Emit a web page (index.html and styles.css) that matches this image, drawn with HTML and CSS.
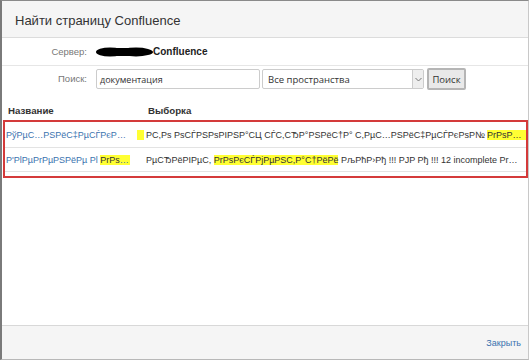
FILE: index.html
```html
<!DOCTYPE html>
<html lang="ru">
<head>
<meta charset="utf-8">
<link rel="stylesheet" href="styles.css">
</head>
<body>
<div class="dialog">
  <div class="header"><h1 class="title">Найти страницу Confluence</h1></div>
  <div class="body">
    <div class="form-row server-row">
      <span class="label">Сервер:</span>
      <span class="server">
        <svg class="blob" width="57" height="10" viewBox="0 0 57 10"><ellipse cx="14" cy="5" rx="14" ry="4.6" fill="#000"/><ellipse cx="40" cy="5" rx="17" ry="4.4" fill="#000"/><rect x="12" y="1" width="30" height="8" fill="#000"/></svg><b class="server-name">Confluence</b>
      </span>
    </div>
    <div class="form-row search-row">
      <span class="label">Поиск:</span>
      <div class="input">документация</div>
      <div class="select"><span class="select-text">Все пространства</span><span class="select-arrow"><svg width="7" height="5" viewBox="0 0 7 5"><path d="M0.5 1 L3.5 4 L6.5 1" fill="none" stroke="#777" stroke-width="1"/></svg></span></div>
      <div class="button">Поиск</div>
    </div>
    <div class="results-head">
      <span class="col-name">Название</span>
      <span class="col-excerpt">Выборка</span>
    </div>
    <div class="results">
      <div class="row">
        <div class="c1"><span class="name">PўPµC…PSPёC‡PµCЃPєPsP№ PrPsPєCЃPjPµPSC,</span><mark class="hl stub">&nbsp;</mark></div>
        <div class="c2">PC,Ps PsCЃPSPsPIPSP°CЦ CЃC,CЂP°PSPёC†P° C,PµC…PSPёC‡PµCЃPєPsP№ <mark class="hl">PrPsPєCЃPjPµPSC,P°C†PёPё</mark></div>
      </div>
      <div class="row">
        <div class="c1"><span class="name">P'PlPµPrPµPSPёPµ Pl <mark class="hl">PrPsPєCЃPjPµPSC,P°C†PёCЋ</mark></span></div>
        <div class="c2">PµCЂPёPIPµC, <mark class="hl">PrPsPєCЃPjPµPSC,P°C†PёPё</mark> PљPћP›Pђ !!! PЈP Pђ !!! 12 incomplete PrPsPєCЃPjPµPSC,</div>
      </div>
    </div>
  </div>
  <div class="footer"><span class="close">Закрыть</span></div>
</div>
</body>
</html>
```
FILE: styles.css
```css
* { box-sizing: border-box; }
html, body { margin: 0; padding: 0; background: #fff; }
body { width: 531px; height: 360px; overflow: hidden; font-family: "Liberation Sans", Arial, sans-serif; }
.dialog {
  width: 529px; height: 360px;
  border-left: 2px solid #7a7a7a;
  border-top: 1px solid #8a8a8a;
  border-right: 1px solid #c8c8c8;
  border-bottom: 1px solid #b8b8b8;
  display: flex; flex-direction: column;
  background: #fff;
}
.header {
  height: 37px; background: #f5f5f5; border-bottom: 1px solid #dcdcdc;
  display: flex; align-items: center; padding-left: 13px; flex-shrink: 0;
}
.title { margin: 0; font-weight: normal; font-size: 13px; color: #333; padding-top: 3px; }
.body { flex: 1; display: flex; flex-direction: column; }
.form-row { display: flex; align-items: center; }
.server-row { height: 28px; border-bottom: 1px solid #e6e6e6; }
.search-row { height: 30px; align-items: flex-start; padding-top: 3px; }
.label { width: 85px; text-align: right; font-size: 9.5px; color: #777; flex-shrink: 0; }
.search-row .label { line-height: 20px; }
.server { margin-left: 9px; display: flex; align-items: center; }
.blob { display: block; }
.server-name { font-size: 10px; color: #222; }
.input {
  margin-left: 9px; width: 164px; height: 20px; border: 1px solid #ccc; border-radius: 2px;
  font-family: "Open Sans", "DejaVu Sans", sans-serif; font-size: 9px; color: #333;
  display: flex; align-items: center; padding-left: 3px;
}
.select {
  margin-left: 2px; width: 162px; height: 20px; border: 1px solid #ccc; border-radius: 2px;
  display: flex; align-items: center; justify-content: space-between;
  font-family: "Open Sans", "DejaVu Sans", sans-serif; font-size: 9.5px; color: #333;
}
.select-text { padding-left: 5px; }
.select-arrow {
  width: 11px; height: 18px; background: #eee; border-left: 1px solid #ccc;
  display: flex; align-items: center; justify-content: center;
}
.button {
  margin-left: 3px; margin-top: -1px; width: 39px; height: 22px; background: #e9e9e9;
  border: 2px solid #b5b5b5; border-radius: 2px;
  display: flex; align-items: center; justify-content: center;
  font-family: "Open Sans", "DejaVu Sans", sans-serif; font-size: 9.5px; color: #333;
}
.results-head {
  display: flex; height: 24px; align-items: flex-end; padding-bottom: 4px;
  font-size: 9.7px; font-weight: bold; color: #333;
}
.col-name { width: 146px; padding-left: 6px; }
.results {
  margin-left: 1px; width: 525px; height: 58px;
  border: 2px solid #d43a3a;
}
.row {
  display: grid; grid-template-columns: 141px 1fr; align-items: center;
  height: 26px; border-bottom: 1px solid #e3e3e3;
  font-size: 9px; white-space: nowrap;
}
.row + .row { height: 24px; }
.c1 { display: flex; align-items: center; overflow: hidden; padding-left: 1px; }
.name {
  color: #3b73af; display: block; max-width: 122px; overflow: hidden; text-overflow: ellipsis;
}
.row + .row .name { max-width: 124px; }
.stub { margin-left: 9px; width: 7px; overflow: hidden; display: inline-block; }
.c2 { color: #333; overflow: hidden; text-overflow: ellipsis; padding-right: 3px; }
.hl { background: #ffff33; color: #333; }
.footer {
  height: 34px; background: #f5f5f5; border-top: 1px solid #d8d8d8;
  display: flex; align-items: center; justify-content: flex-end; padding-right: 7px; flex-shrink: 0;
}
.close { font-size: 9px; color: #3b73af; }
```
